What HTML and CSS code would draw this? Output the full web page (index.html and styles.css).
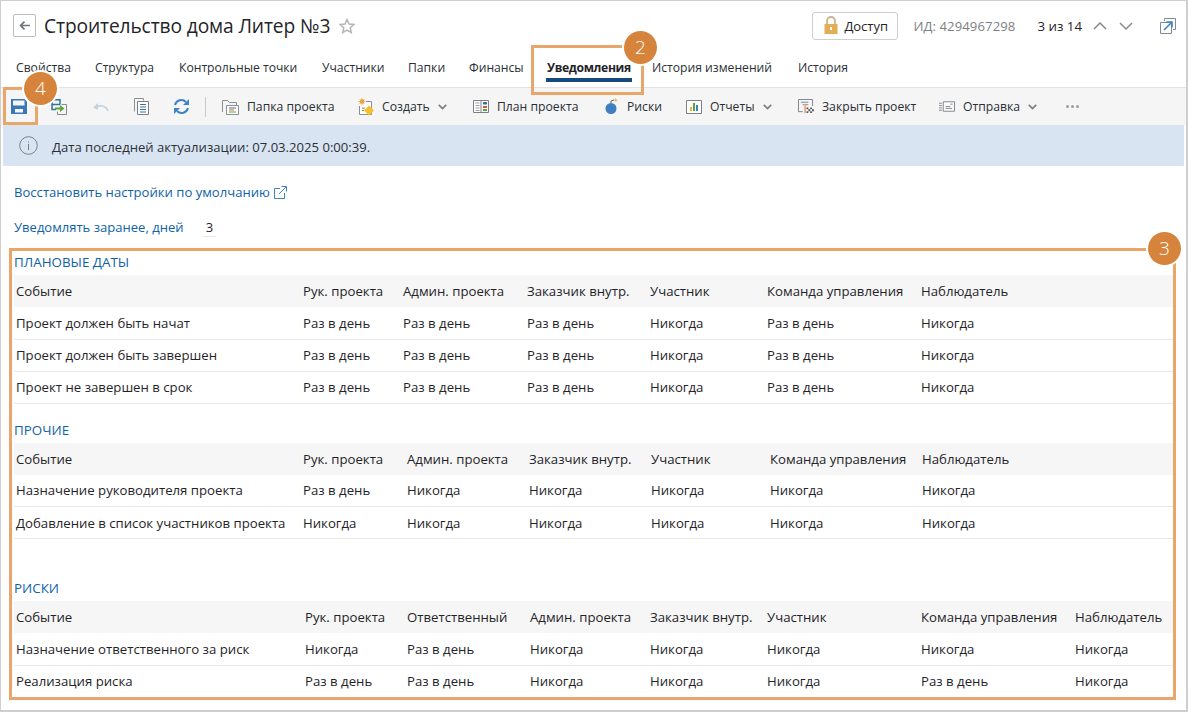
FILE: index.html
```
<!DOCTYPE html>
<html lang="ru">
<head>
<meta charset="utf-8">
<title>Строительство дома Литер №3</title>
<link rel="stylesheet" href="styles.css">
</head>
<body>
<div class="window">
  <header class="head">
    <button class="back"><svg width="16" height="14" viewBox="0 0 16 14"><path d="M15 7H3M8 2 3 7l5 5" fill="none" stroke="#70767c" stroke-width="2.200"/></svg></button>
    <h1 class="title">Строительство дома Литер №3</h1>
    <svg class="star" width="16" height="16" viewBox="0 0 16 16"><path d="M8 1.500 10 6l4.800.5-3.600 3.200 1 4.800L8 12l-4.200 2.500 1-4.800L1.200 6.500 6 6z" fill="none" stroke="#b5b5b5" stroke-width="1.500"/></svg>
    <div class="head-right">
      <button class="access"><svg width="14" height="19" viewBox="0 0 14 19"><path d="M3 8V5a4 4 0 0 1 8 0v3" fill="none" stroke="#c8b48f" stroke-width="1.800"/><rect x="0.500" y="8" width="13" height="10" fill="#e3ad55"/><rect x="6" y="11" width="2" height="3" fill="#fff"/></svg>Доступ</button>
      <span class="id">ИД: 4294967298</span>
      <span class="count">3 из 14</span>
      <svg class="chev-up" width="14" height="8" viewBox="0 0 14 8"><path d="M1 7l6-6 6 6" fill="none" stroke="#868b90" stroke-width="1.500"/></svg>
      <svg class="chev-down" width="14" height="8" viewBox="0 0 14 8"><path d="M1 1l6 6 6-6" fill="none" stroke="#868b90" stroke-width="1.500"/></svg>
      <svg class="popout" width="16" height="16" viewBox="0 0 16 16"><path d="M4.500 3V.5h11v11H13M.5 4.500h11v11H.5z" fill="none" stroke="#7f8b96"/><path d="M4 12l7-7M6.500 4h5.500v5.500" fill="none" stroke="#3f83c4" stroke-width="1.600"/></svg>
    </div>
  </header>

  <nav class="tabs">
    <a class="tab t1">Свойства</a>
    <a class="tab t2">Структура</a>
    <a class="tab t3">Контрольные точки</a>
    <a class="tab t4">Участники</a>
    <a class="tab t5">Папки</a>
    <a class="tab t6">Финансы</a>
    <a class="tab t7 active">Уведомления</a>
    <a class="tab t8">История изменений</a>
    <a class="tab t9">История</a>
  </nav>

  <div class="toolbar">
    <span class="ibtn i-save"><svg width="16" height="15" viewBox="0 0 16 15"><path d="M0 0h13.500L16 2.500V15H0z" fill="#3a78b5"/><path d="M2 1.500h11.500v5H2z" fill="#f5f5f5"/><path d="M4 10h8v3.500H4z" fill="#f5f5f5"/></svg></span>
    <span class="ibtn i-saveto"><svg width="16" height="16" viewBox="0 0 16 16"><path d="M1 5.500V.75h8V5.500M1 5.500h8M1 5.500v5h4" fill="none" stroke="#3a6f9f" stroke-width="1.500"/><path d="M10.500 5.500h5v10h-9v-3" fill="none" stroke="#85898d"/><path d="M4 8.500h5V6l4.500 3.500L9 13v-2.500H4z" fill="#5aa63c"/></svg></span>
    <span class="ibtn i-undo"><svg width="16" height="10" viewBox="0 0 16 10"><path d="M15 9C13 4 8 3 3 5" fill="none" stroke="#c4d3e2" stroke-width="1.800"/><path d="M0 5.500 5 1v7z" fill="#c4d3e2"/></svg></span>
    <span class="ibtn i-copy"><svg width="15" height="17" viewBox="0 0 15 17"><path d="M.5 13.500V.5h9v2" fill="none" stroke="#8b9096"/><path d="M3.500 3.500h11v13h-11z" fill="#fff" stroke="#7b8086"/><path d="M6 6.500h6M6 9h6M6 11.500h6M6 14h6" stroke="#3a6f9f"/></svg></span>
    <span class="ibtn i-refresh"><svg width="17" height="17" viewBox="0 0 17 17"><path d="M2 7a6.500 6.500 0 0 1 11-3" fill="none" stroke="#3f83c4" stroke-width="2"/><path d="M16 1v6h-6z" fill="#3f83c4"/><path d="M15 10a6.500 6.500 0 0 1-11 3" fill="none" stroke="#3f83c4" stroke-width="2"/><path d="M1 16v-6h6z" fill="#3f83c4"/></svg></span>
    <span class="sep"></span>
    <span class="tool w-folder"><svg width="17" height="16" viewBox="0 0 17 16"><path d="M.5 13V1.500h5l2 2h7v3" fill="none" stroke="#8b9096"/><path d="M4.500 6.500h12v9h-12z" fill="#fff" stroke="#8b9096"/><path d="M7 9h7" stroke="#4a6d90"/><path d="M7 11h5" stroke="#d96b3c"/><path d="M7 13h7" stroke="#5aa63c"/></svg>Папка проекта</span>
    <span class="tool w-create"><svg width="16" height="18" viewBox="0 0 16 18"><path d="M8 3.500h5.500v13H1.500V8" fill="#fff" stroke="#8b9096"/><circle cx="4" cy="3.500" r="2.200" fill="#e8a33d"/><path d="M4 0v7M.5 3.500h7M1.500 1l5 5M6.500 1l-5 5" stroke="#e8a33d" stroke-width=".7"/><path d="M4 10h3" stroke="#d96b3c"/><path d="M4 12.500h2" stroke="#5aa63c"/><path d="M11 7.500 16 12.500l-5 5-5-5z" fill="#f5c02e"/></svg>Создать<svg class="caret" width="9" height="6" viewBox="0 0 9 6"><path d="M.8.8 4.500 4.500 8.200.8" fill="none" stroke="#7b7f84" stroke-width="1.700"/></svg></span>
    <span class="tool w-plan"><svg width="16" height="13" viewBox="0 0 16 13"><path d="M.5.500h15v12H.5z" fill="#fff" stroke="#7b8086"/><path d="M8 .5v12" stroke="#7b8086"/><path d="M2.500 3h4M2.500 5.500h4M2.500 8h4M2.500 10.500h4" stroke="#9a9ea3"/><path d="M10 2h4v2.500h-4z" fill="#3a6f9f"/><path d="M10 6h4v2h-4z" fill="#d9533c"/><path d="M10 9h4v2h-4z" fill="#5aa63c"/></svg>План проекта</span>
    <span class="tool w-risk"><svg width="14" height="17" viewBox="0 0 14 17"><circle cx="6" cy="10.500" r="5.500" fill="#3f7fc0"/><path d="M6 5V3l3-1" fill="none" stroke="#5c6066"/><path d="M10.500 0l.8 1.500L13 2l-1.500.8-.5 1.500-.8-1.500L8.500 2l1.500-.5z" fill="#eeb53c"/></svg>Риски</span>
    <span class="tool w-rep"><svg width="16" height="14" viewBox="0 0 16 14"><path d="M.5.500h15v13H.5z" fill="#fff" stroke="#7b8086"/><path d="M4 7h2v4H4z" fill="#eeb53c"/><path d="M7 3h2v8H7z" fill="#5aa63c"/><path d="M10 5h2v6h-2z" fill="#3f83c4"/></svg>Отчеты<svg class="caret" width="9" height="6" viewBox="0 0 9 6"><path d="M.8.8 4.500 4.500 8.200.8" fill="none" stroke="#7b7f84" stroke-width="1.700"/></svg></span>
    <span class="tool w-close"><svg width="16" height="15" viewBox="0 0 17 16"><path d="M5 13.500H.5V.5h15v7" fill="none" stroke="#7b8086"/><path d="M3 3.500h8" stroke="#8ab4d8" stroke-width="1.500"/><path d="M5 6h6" stroke="#e3936a" stroke-width="1.500"/><path d="M7.500 7v8" stroke="#d96b3c"/><path d="M9 9h8v7H9z" fill="#fff"/><path d="M9 9h2v2H9zM13 9h2v2h-2zM11 11h2v2h-2zM15 11h2v2h-2zM9 13h2v2H9zM13 13h2v2h-2z" fill="#555"/></svg>Закрыть проект</span>
    <span class="tool w-send"><svg width="16" height="11" viewBox="0 0 17 11"><path d="M4.500.5h12v10h-12z" fill="#fff" stroke="#7b8086"/><path d="M0 2h3M0 4.500h3M0 7h3M0 9.500h3" stroke="#7b8086"/><path d="M7 5.500h5M7 7.500h7M12 3h2.500" stroke="#7b8086"/></svg>Отправка<svg class="caret" width="9" height="6" viewBox="0 0 9 6"><path d="M.8.8 4.500 4.500 8.200.8" fill="none" stroke="#7b7f84" stroke-width="1.700"/></svg></span>
    <span class="more"><i></i><i></i><i></i></span>
  </div>

  <div class="info">
    <svg width="19" height="19" viewBox="0 0 19 19"><circle cx="9.500" cy="9.500" r="8.800" fill="none" stroke="#7d8185"/><path d="M9.500 5.500v1M9.500 8v6" stroke="#7d8185"/></svg>
    <span class="info-text">Дата последней актуализации: 07.03.2025 0:00:39.</span>
  </div>

  <main class="content">
    <p class="restore"><a>Восстановить настройки по умолчанию</a><svg width="13" height="13" viewBox="0 0 13 13"><path d="M6 2.500H.5v10h10V7" fill="none" stroke="#3f83c4"/><path d="M5 8l7-7M7.500.5h5v5" fill="none" stroke="#3f83c4"/></svg></p>
    <p class="days"><span class="days-label">Уведомлять заранее, дней</span><span class="days-val">3</span></p>

    <h2 class="sect s1">ПЛАНОВЫЕ ДАТЫ</h2>
    <table class="grid">
      <colgroup><col class="a1"><col class="a2"><col class="a3"><col class="a4"><col class="a5"><col class="a6"><col></colgroup>
      <thead><tr><th>Событие</th><th>Рук. проекта</th><th>Админ. проекта</th><th>Заказчик внутр.</th><th>Участник</th><th>Команда управления</th><th>Наблюдатель</th></tr></thead>
      <tbody>
        <tr><td>Проект должен быть начат</td><td>Раз в день</td><td>Раз в день</td><td>Раз в день</td><td>Никогда</td><td>Раз в день</td><td>Никогда</td></tr>
        <tr><td>Проект должен быть завершен</td><td>Раз в день</td><td>Раз в день</td><td>Раз в день</td><td>Никогда</td><td>Раз в день</td><td>Никогда</td></tr>
        <tr><td>Проект не завершен в срок</td><td>Раз в день</td><td>Раз в день</td><td>Раз в день</td><td>Никогда</td><td>Раз в день</td><td>Никогда</td></tr>
      </tbody>
    </table>

    <h2 class="sect s2">ПРОЧИЕ</h2>
    <table class="grid">
      <colgroup><col class="b1"><col class="b2"><col class="b3"><col class="b4"><col class="b5"><col class="b6"><col></colgroup>
      <thead><tr><th>Событие</th><th>Рук. проекта</th><th>Админ. проекта</th><th>Заказчик внутр.</th><th>Участник</th><th>Команда управления</th><th>Наблюдатель</th></tr></thead>
      <tbody>
        <tr><td>Назначение руководителя проекта</td><td>Раз в день</td><td>Никогда</td><td>Никогда</td><td>Никогда</td><td>Никогда</td><td>Никогда</td></tr>
        <tr><td>Добавление в список участников проекта</td><td>Никогда</td><td>Никогда</td><td>Никогда</td><td>Никогда</td><td>Никогда</td><td>Никогда</td></tr>
      </tbody>
    </table>

    <h2 class="sect s3">РИСКИ</h2>
    <table class="grid">
      <colgroup><col class="c1"><col class="c2"><col class="c3"><col class="c4"><col class="c5"><col class="c6"><col class="c7"><col></colgroup>
      <thead><tr><th>Событие</th><th>Рук. проекта</th><th>Ответственный</th><th>Админ. проекта</th><th>Заказчик внутр.</th><th>Участник</th><th>Команда управления</th><th>Наблюдатель</th></tr></thead>
      <tbody>
        <tr><td>Назначение ответственного за риск</td><td>Никогда</td><td>Раз в день</td><td>Никогда</td><td>Никогда</td><td>Никогда</td><td>Никогда</td><td>Никогда</td></tr>
        <tr><td>Реализация риска</td><td>Раз в день</td><td>Раз в день</td><td>Никогда</td><td>Никогда</td><td>Никогда</td><td>Раз в день</td><td>Никогда</td></tr>
      </tbody>
    </table>
  </main>

  <div class="frame f2"></div><div class="badge b-2">2</div>
  <div class="frame f3"></div><div class="badge b-3">3</div>
  <div class="frame f4"></div><div class="badge b-4">4</div>
</div>
</body>
</html>
```
FILE: styles.css
```
* { box-sizing: border-box; }
html, body { margin: 0; padding: 0; background: #fff; }
body { font-family: "Open Sans", "Noto Sans", sans-serif; font-size: 13.2px; color: #1f2429; }
.window { position: relative; width: 1188px; height: 712px; overflow: hidden; border-top: 1px solid #cfcfcf; border-left: 1px solid #cfcfcf; border-right: 2px solid #cfcfcf; border-bottom: 2px solid #cfcfcf; }

.head { display: flex; align-items: center; height: 50px; padding: 0 10px 1px 12px; }
.back { width: 23px; height: 23px; padding: 0; margin: 0; border: 1px solid #bdbdbd; border-radius: 2px; background: #fff; display: flex; align-items: center; justify-content: center; }
.back svg { width: 13px; height: 11px; }
.title { margin: 0 0 0 8px; font-size: 19.200px; font-weight: 400; letter-spacing: -0.12px; color: #1f2429; }
.star { margin-left: 9px; }
.head-right { display: flex; align-items: center; margin-left: auto; }
.access { display: flex; align-items: center; gap: 6px; width: 86px; height: 28px; padding: 0 0 0 11px; border: 1px solid #cfcfcf; border-radius: 3px; background: #fff; font: inherit; font-size: 13px; color: #1f2429; }
.id { margin-left: 15px; color: #7d8185; letter-spacing: 0.1px; font-size: 13.100px; }
.count { margin-left: 22px; color: #1f2429; font-size: 13.300px; }
.chev-up { margin-left: 11px; }
.chev-down { margin-left: 12px; }
.popout { margin-left: 27px; margin-right: 0; }

.tabs { position: relative; height: 36px; font-size: 12.150px; }
.tab { position: absolute; top: 8px; color: #2a2f35; white-space: nowrap; }
.t1 { left: 15px; } .t2 { left: 94px; } .t3 { left: 178px; } .t4 { left: 321px; } .t5 { left: 407px; }
.t6 { left: 468px; } .t7 { left: 546px; } .t8 { left: 651px; } .t9 { left: 797px; }
.tab.active { font-weight: 700; letter-spacing: -0.35px; color: #1f2429; }
.tab.active::after { content: ""; position: absolute; left: -1px; right: -1px; bottom: -6px; height: 4px; background: #174a7c; }

.toolbar { display: flex; align-items: center; height: 38px; background: #f5f5f5; border-top: 1px solid #e3e3e3; padding-left: 10px; font-size: 12.200px; }
.ibtn { display: flex; width: 41px; flex: none; }
.ibtn.i-save { width: 40px; }
.ibtn.i-saveto { width: 42px; }
.ibtn.i-undo { width: 41px; }
.ibtn.i-copy { width: 39px; }
.ibtn.i-refresh { width: 32px; }
.sep { width: 1px; height: 20px; background: #c9c9c9; margin-right: 16px; flex: none; }
.tool { display: flex; align-items: center; gap: 8px; flex: none; color: #2a2f35; white-space: nowrap; }
.w-folder { width: 136px; } .w-create { width: 115px; } .w-plan { width: 132px; } .w-risk { width: 81px; }
.w-rep { width: 112px; } .w-close { width: 141px; } .w-send { width: 127px; }
.more { display: flex; gap: 2px; }
.more i { width: 3px; height: 3px; border-radius: 50%; background: #9a9ea3; }

.info { display: flex; align-items: center; gap: 14px; height: 41px; margin: 0 2px 0 2px; padding-left: 16px; background: #d9e4f3; color: #2a2f35; font-size: 13.100px; }
.info-text { margin-top: 2px; }
.content { padding: 0 0 0 13px; }
.restore { display: flex; align-items: center; gap: 4px; margin: 17px 0 0; height: 18px; color: #0f62a8; font-size: 13.100px; }
.days { display: flex; align-items: center; margin: 17px 0 0; height: 18px; color: #0f62a8; font-size: 13.050px; }
.days-label { width: 170px; }
.days-val { margin-left: 19px; width: 13px; height: 20px; line-height: 20px; text-align: center; color: #1f2429; border-bottom: 1px solid #e6e6e6; }
.sect { margin: 0; font-size: 13.400px; font-weight: 400; line-height: 18px; color: #0f62a8; }
.s1 { margin-top: 17px; }
.s2 { margin-top: 17px; }
.s3 { margin-top: 40px; }
.grid { width: 1160px; table-layout: fixed; border-collapse: collapse; margin-top: 4px; }
.grid th, .grid td { height: 32px; padding: 0 0 0 2px; text-align: left; font-weight: 400; white-space: nowrap; overflow: hidden; }
.grid th { background: #f6f6f6; }
.grid td { border-bottom: 1px solid #e8e8e8; }
.a1 { width: 287px; } .a2 { width: 100px; } .a3 { width: 124px; } .a4 { width: 123px; } .a5 { width: 117px; } .a6 { width: 154px; }
.b1 { width: 287px; } .b2 { width: 104px; } .b3 { width: 122px; } .b4 { width: 122px; } .b5 { width: 119px; } .b6 { width: 152px; }
.c1 { width: 289px; } .c2 { width: 102px; } .c3 { width: 123px; } .c4 { width: 120px; } .c5 { width: 117px; } .c6 { width: 154px; } .c7 { width: 154px; }

.frame { position: absolute; border: 3px solid #e9a66b; }
.f2 { left: 530px; top: 44px; width: 113px; height: 50px; }
.f3 { left: 8px; top: 247px; width: 1167px; height: 452px; }
.f4 { left: 2px; top: 86px; width: 35px; height: 38px; }
.badge { position: absolute; width: 33px; height: 33px; border-radius: 50%; background: #d6843c; color: #fff; font-size: 19px; font-weight: 300; line-height: 33px; text-align: center; box-shadow: 0 0 0 2px #fff; }
.b-2 { left: 623px; top: 30px; }
.b-3 { left: 1147px; top: 231px; }
.b-4 { left: 23px; top: 71px; }
```
